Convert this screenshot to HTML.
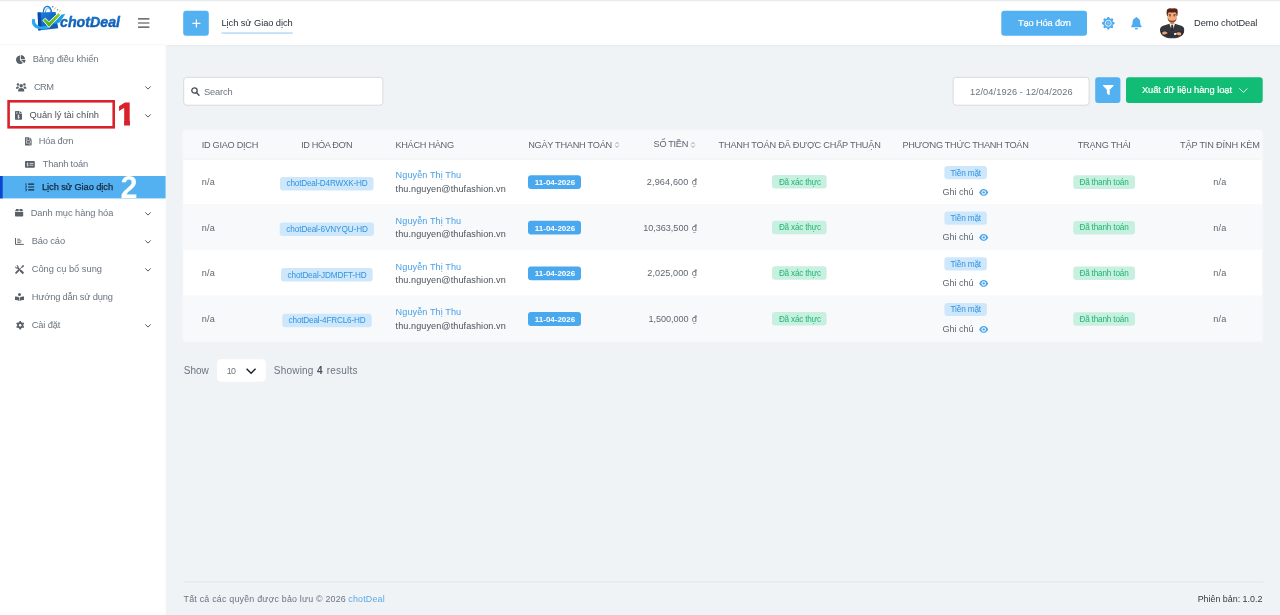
<!DOCTYPE html>
<html lang="vi">
<head>
<meta charset="utf-8">
<title>Lịch sử Giao dịch - chotDeal</title>
<style>
*{box-sizing:border-box}
html,body{margin:0;padding:0}
body{width:1280px;height:615px;overflow:hidden;position:relative;background:#eff3f6;font-family:"Liberation Sans",sans-serif;}
.t{position:absolute;white-space:pre;line-height:normal}
#tx{position:absolute;left:0;top:0;width:1280px;height:615px;will-change:transform}
svg{position:absolute;overflow:visible}
</style>
</head>
<body>
<svg id="bg" style="left:0;top:0" width="1280" height="615" viewBox="0 0 1280 615">
<rect x="0.00" y="45.00" width="1280.00" height="1.20" fill="#e9edf1"/>
<rect x="0.00" y="46.20" width="1280.00" height="1.00" fill="#edf1f4"/>
<rect x="0.00" y="0.00" width="1280.00" height="1.50" fill="#ebebeb"/>
<rect x="0.00" y="1.50" width="1280.00" height="43.50" fill="#ffffff"/>
<rect x="165.60" y="45.00" width="0.80" height="570.00" fill="#f2f5f7"/>
<rect x="0.00" y="45.00" width="165.60" height="570.00" fill="#ffffff"/>
<rect x="0.00" y="44.40" width="165.60" height="0.80" fill="#f6f6f7"/>
<rect x="0.00" y="176.00" width="165.60" height="22.40" fill="#53b0f1"/>
<rect x="0.00" y="176.00" width="2.70" height="22.40" fill="#0b46cf"/>
<rect x="8.60" y="101.30" width="105.10" height="26.00" fill="none" stroke="#d9222c" stroke-width="2.6"/>
<rect x="183.20" y="10.70" width="25.60" height="25.00" fill="#53b0f1" rx="3"/>
<rect x="221.50" y="32.30" width="71.30" height="1.50" fill="#b7daf7"/>
<rect x="1001.30" y="10.70" width="85.70" height="25.10" fill="#53b0f1" rx="3"/>
<rect x="183.70" y="77.30" width="199.20" height="27.90" fill="#ffffff" rx="3" stroke="#d6dade" stroke-width="1"/>
<rect x="953.10" y="77.30" width="136.00" height="27.90" fill="#ffffff" rx="3" stroke="#d6dade" stroke-width="1"/>
<rect x="1095.20" y="77.20" width="25.20" height="25.70" fill="#53b0f1" rx="3"/>
<rect x="1126.00" y="77.20" width="136.70" height="25.70" fill="#11bc74" rx="3"/>
<rect x="182.40" y="129.40" width="1080.80" height="212.80" fill="#f5f7f9" rx="3.8"/>
<clipPath id="cardclip"><rect x="183.2" y="130" width="1079" height="211.4" rx="3"/></clipPath><g clip-path="url(#cardclip)">
<rect x="183.20" y="130.00" width="1079.00" height="29.40" fill="#f8f9fb"/>
<rect x="183.20" y="158.80" width="1077.00" height="1.00" fill="#e8ebee"/>
<rect x="183.20" y="159.60" width="1079.00" height="44.60" fill="#ffffff"/>
<rect x="183.20" y="204.20" width="1079.00" height="45.80" fill="#f8f9fb"/>
<rect x="183.20" y="250.00" width="1079.00" height="45.60" fill="#ffffff"/>
<rect x="183.20" y="295.60" width="1079.00" height="45.80" fill="#f8f9fb"/>
</g>
<rect x="280.00" y="176.90" width="93.60" height="13.50" fill="#cfe7fb" rx="3"/>
<rect x="528.00" y="175.20" width="53.00" height="13.80" fill="#4aa8ef" rx="3"/>
<rect x="772.00" y="175.10" width="54.60" height="13.50" fill="#c8f0e0" rx="3"/>
<rect x="944.40" y="166.00" width="42.50" height="13.20" fill="#cfe7fb" rx="3"/>
<rect x="1073.30" y="175.30" width="61.70" height="13.60" fill="#c8f0e0" rx="3"/>
<rect x="279.70" y="222.50" width="94.30" height="13.50" fill="#cfe7fb" rx="3"/>
<rect x="528.00" y="220.80" width="53.00" height="13.80" fill="#4aa8ef" rx="3"/>
<rect x="772.00" y="220.70" width="54.60" height="13.50" fill="#c8f0e0" rx="3"/>
<rect x="944.40" y="211.60" width="42.50" height="13.20" fill="#cfe7fb" rx="3"/>
<rect x="1073.30" y="220.90" width="61.70" height="13.60" fill="#c8f0e0" rx="3"/>
<rect x="281.00" y="268.10" width="91.70" height="13.50" fill="#cfe7fb" rx="3"/>
<rect x="528.00" y="266.40" width="53.00" height="13.80" fill="#4aa8ef" rx="3"/>
<rect x="772.00" y="266.30" width="54.60" height="13.50" fill="#c8f0e0" rx="3"/>
<rect x="944.40" y="257.20" width="42.50" height="13.20" fill="#cfe7fb" rx="3"/>
<rect x="1073.30" y="266.50" width="61.70" height="13.60" fill="#c8f0e0" rx="3"/>
<rect x="282.30" y="313.80" width="89.50" height="13.50" fill="#cfe7fb" rx="3"/>
<rect x="528.00" y="312.10" width="53.00" height="13.80" fill="#4aa8ef" rx="3"/>
<rect x="772.00" y="312.00" width="54.60" height="13.50" fill="#c8f0e0" rx="3"/>
<rect x="944.40" y="302.90" width="42.50" height="13.20" fill="#cfe7fb" rx="3"/>
<rect x="1073.30" y="312.20" width="61.70" height="13.60" fill="#c8f0e0" rx="3"/>
<rect x="217.10" y="359.20" width="48.70" height="22.60" fill="#ffffff" rx="4"/>
<rect x="183.60" y="581.40" width="1080.00" height="1.00" fill="#e2e7ec"/>
</svg>
<svg style="left:979.1px;top:188.7px" width="9.4" height="6.8" viewBox="0 0 9.8 7.4"><path d="M0 3.7 C1.2 1.2 2.9 0 4.9 0 C6.9 0 8.6 1.2 9.8 3.7 C8.6 6.2 6.9 7.4 4.9 7.4 C2.9 7.4 1.2 6.2 0 3.7 Z" fill="#47a3ea"/><circle cx="4.9" cy="3.7" r="2.45" fill="#fff"/><circle cx="4.9" cy="3.7" r="1.3" fill="#47a3ea"/></svg>
<svg style="left:979.1px;top:234.3px" width="9.4" height="6.8" viewBox="0 0 9.8 7.4"><path d="M0 3.7 C1.2 1.2 2.9 0 4.9 0 C6.9 0 8.6 1.2 9.8 3.7 C8.6 6.2 6.9 7.4 4.9 7.4 C2.9 7.4 1.2 6.2 0 3.7 Z" fill="#47a3ea"/><circle cx="4.9" cy="3.7" r="2.45" fill="#fff"/><circle cx="4.9" cy="3.7" r="1.3" fill="#47a3ea"/></svg>
<svg style="left:979.1px;top:279.9px" width="9.4" height="6.8" viewBox="0 0 9.8 7.4"><path d="M0 3.7 C1.2 1.2 2.9 0 4.9 0 C6.9 0 8.6 1.2 9.8 3.7 C8.6 6.2 6.9 7.4 4.9 7.4 C2.9 7.4 1.2 6.2 0 3.7 Z" fill="#47a3ea"/><circle cx="4.9" cy="3.7" r="2.45" fill="#fff"/><circle cx="4.9" cy="3.7" r="1.3" fill="#47a3ea"/></svg>
<svg style="left:979.1px;top:325.6px" width="9.4" height="6.8" viewBox="0 0 9.8 7.4"><path d="M0 3.7 C1.2 1.2 2.9 0 4.9 0 C6.9 0 8.6 1.2 9.8 3.7 C8.6 6.2 6.9 7.4 4.9 7.4 C2.9 7.4 1.2 6.2 0 3.7 Z" fill="#47a3ea"/><circle cx="4.9" cy="3.7" r="2.45" fill="#fff"/><circle cx="4.9" cy="3.7" r="1.3" fill="#47a3ea"/></svg>
<!-- LOGO -->
<svg style="left:30px;top:4px;will-change:transform" width="96" height="30" viewBox="30 4 96 30">
  <defs>
    <linearGradient id="lgTxt" x1="0" y1="0" x2="0" y2="1"><stop offset="0" stop-color="#1f86dc"/><stop offset="1" stop-color="#0a49a2"/></linearGradient>
    <linearGradient id="lgChk" x1="0" y1="0" x2="0" y2="1"><stop offset="0" stop-color="#93d62c"/><stop offset="1" stop-color="#4fa61c"/></linearGradient>
    <linearGradient id="lgBag" x1="0" y1="0" x2="1" y2="1"><stop offset="0" stop-color="#1c7fdc"/><stop offset="1" stop-color="#0f55b4"/></linearGradient>
  </defs>
  <!-- bag handles -->
  <path d="M43.2 14 C43 8.6 45.2 6.4 47.2 6.4 C49.6 6.4 51.4 8.8 51.8 13.6" fill="none" stroke="#1b78d4" stroke-width="1.3"/>
  <path d="M45.4 13.4 C45.4 9.6 46.8 8 48.2 8 C49.8 8 50.4 10 50.6 12.6" fill="none" stroke="#2a8fe6" stroke-width="0.8"/>
  <!-- bag body -->
  <path d="M37.6 12.4 L55.6 12 L58.2 28.2 L38.4 30.4 Z" fill="url(#lgBag)"/>
  <path d="M37.6 12.4 L40.6 12.3 L41.6 30 L38.4 30.4 Z" fill="#0c4ba2"/>
  <!-- arrow band -->
  <path d="M56.5 15.4 L65.3 14 L59.6 22.4 L54 24 Z" fill="#1e9be9"/>
  <!-- swoosh -->
  <path d="M32.4 18.8 C30.4 24.2 34 29.6 42.6 29.4 C46 29.3 48.6 28.4 50.6 27.2 L46.6 25.6 C44.4 26.6 42.4 26.8 40.4 26.4 C36.2 25.6 34.4 22.6 35.2 19.6 Z" fill="#2aa9f3"/>
  <!-- check -->
  <path d="M42.8 20.4 L45.4 18.2 L49 21.8 L58.4 12.8 L60.8 15 L49 27.4 Z" fill="url(#lgChk)" stroke="#fff" stroke-width="0.9" stroke-linejoin="round"/>
  <!-- sparkles -->
  <circle cx="52.7" cy="6.7" r="0.75" fill="#1b78d4"/>
  <path d="M53.6 9.8 L56.4 7.1" stroke="#f2a43a" stroke-width="0.8"/>
  <circle cx="57.6" cy="9.8" r="0.7" fill="#36a9c9"/>
  <path d="M59.2 11.5 L60.9 10.3" stroke="#b8d432" stroke-width="0.9"/>
  <text x="60" y="26.8" font-family="'Liberation Sans',sans-serif" font-size="14.6" font-weight="700" font-style="italic" fill="url(#lgTxt)" stroke="#1262bd" stroke-width="0.45" textLength="60" lengthAdjust="spacingAndGlyphs">chotDeal</text>
</svg>
<!-- hamburger -->
<svg style="left:137.6px;top:18px" width="12" height="10" viewBox="0 0 12 10"><path d="M0 0.8H11.4M0 5H11.4M0 9.1H11.4" stroke="#3f454b" stroke-width="1.15" fill="none"/></svg>
<!-- plus -->
<svg style="left:191.5px;top:19px" width="9" height="9" viewBox="0 0 9 9"><path d="M4.4 0.4V8.4M0.4 4.4H8.4" stroke="#fff" stroke-width="1.2" fill="none"/></svg>

<!-- gear (header) -->
<svg style="left:1101.8px;top:17.1px" width="12.6" height="12.6" viewBox="-6.3 -6.3 12.6 12.6">
  <g fill="#4dabf0">
    <circle r="4.8"/>
    <path d="M-1.8 -4.3L-0.7 -6.3H0.7L1.8 -4.3ZM-1.8 4.3L-0.7 6.3H0.7L1.8 4.3ZM-4.3 -1.8L-6.3 -0.7V0.7L-4.3 1.8ZM4.3 -1.8L6.3 -0.7V0.7L4.3 1.8Z"/>
    <path transform="rotate(45)" d="M-1.8 -4.3L-0.7 -6.3H0.7L1.8 -4.3ZM-1.8 4.3L-0.7 6.3H0.7L1.8 4.3ZM-4.3 -1.8L-6.3 -0.7V0.7L-4.3 1.8ZM4.3 -1.8L6.3 -0.7V0.7L4.3 1.8Z"/>
  </g>
  <circle r="3" fill="none" stroke="#fff" stroke-width="0.85"/>
  <circle r="1.4" fill="#86c6f6"/>
</svg>
<!-- bell -->
<svg style="left:1130.8px;top:17.1px" width="10.8" height="12.6" viewBox="0 0 10.8 12.6">
  <path d="M5.4 0 C5.9 0 6.3 0.4 6.3 0.9 C8.2 1.4 9.2 3 9.2 5 C9.2 7.4 9.8 8.3 10.5 9 C10.9 9.4 10.7 10.2 10 10.2 H0.8 C0.1 10.2 -0.1 9.4 0.3 9 C1 8.3 1.6 7.4 1.6 5 C1.6 3 2.6 1.4 4.5 0.9 C4.5 0.4 4.9 0 5.4 0 Z M3.9 11 H6.9 C6.9 11.9 6.2 12.6 5.4 12.6 C4.6 12.6 3.9 11.9 3.9 11 Z" fill="#4dabf0"/>
</svg>
<!-- avatar -->
<svg style="left:1160px;top:7.8px" width="24.4" height="30.6" viewBox="0 0 24.4 30.6">
  <defs><clipPath id="avc"><path d="M0 0 H24.4 V22 C24.4 27.4 19 30.6 12.2 30.6 C5.4 30.6 0 27.4 0 22 Z"/></clipPath></defs>
  <g clip-path="url(#avc)">
    <path d="M0 30.6 V21.6 C0.2 19.2 1.6 18 4 17.4 L9.4 15.8 L12.2 15.2 L15 15.8 L20.4 17.4 C22.8 18 24.2 19.2 24.4 21.6 V30.6 Z" fill="#36363d"/>
    <path d="M9.3 15.6 L12.2 23.6 L15.1 15.6 L12.2 14.6 Z" fill="#f6f6f8"/>
    <path d="M11.4 17 H13 L13.5 22 L12.2 24.2 L10.9 22 Z" fill="#2b2b32"/>
    <path d="M10.2 12.6 H14.2 V15.6 L12.2 17 L10.2 15.6 Z" fill="#d98f63"/>
    <path d="M7.7 5 C7.7 2.6 16.6 2.6 16.6 5 V9.6 C16.6 12.6 14.4 14.4 12.2 14.4 C10 14.4 7.7 12.6 7.7 9.6 Z" fill="#f2ab7c"/>
    <path d="M7.7 9 C8 11.6 9.6 12.8 12.2 12.8 C14.8 12.8 16.3 11.6 16.6 9 V10 C16.6 13 14.4 14.6 12.2 14.6 C10 14.6 7.7 13 7.7 10 Z" fill="#8a4a2c"/>
    <path d="M7.2 8.6 C6 3.4 6.8 0.6 9 0.6 L10 0.2 L12 0.5 L14.4 0.2 L16.6 0.8 C17.8 1.2 18.2 4.2 17.1 8.6 L16.5 8 C16.6 5.6 16.2 4.6 15 4.2 C12.6 4.8 10.2 4.6 9 4.2 C8 4.8 7.7 6 7.8 8 Z" fill="#5a2217"/>
    <path d="M8.8 6.6 L11 7 M13.4 7 L15.6 6.6" stroke="#3a1710" stroke-width="0.8"/>
    <path d="M9.3 7.9 H10.8 M13.7 7.9 H15.2" stroke="#2e1a14" stroke-width="0.7"/>
    <path d="M0.8 23.4 C5 22.4 9 24 12.2 25.8 C15.4 24 19.4 22.4 23.6 23.4 L22.8 28 C18.4 26.8 15 27.8 12.2 29 C9.4 27.8 6 26.8 1.6 28 Z" fill="#2d2d34"/>
    <path d="M2.2 24.4 C3.8 23 6.4 23.4 7.6 25 C6.4 26.4 3.8 26.8 2.4 26.2 Z" fill="#eba277"/>
    <path d="M21.2 25 C19.8 23.8 17.2 24 15.8 25.6 C17 27.2 19.6 27.8 21 27 Z" fill="#eba277"/>
    <path d="M13.8 25.4 L15.8 24.8 L16.6 26.6 L14.4 27.2 Z" fill="#f6f6f8"/>
  </g>
</svg>

<!-- search icon -->
<svg style="left:190.8px;top:87.4px" width="8.6" height="8.8" viewBox="0 0 8.6 8.8"><circle cx="3.5" cy="3.5" r="2.7" fill="none" stroke="#454b52" stroke-width="1.3"/><path d="M5.5 5.6L8 8.2" stroke="#454b52" stroke-width="1.4" stroke-linecap="round"/></svg>
<!-- filter icon -->
<svg style="left:1102.8px;top:85.2px" width="10.6" height="10.2" viewBox="0 0 10.6 10.2"><path d="M0.5 0 H10.1 C10.6 0 10.8 0.5 10.4 0.9 L6.7 4.8 V9.4 C6.7 9.9 6.2 10.2 5.8 9.9 L4.3 8.8 C4 8.6 3.9 8.4 3.9 8.1 V4.8 L0.2 0.9 C-0.2 0.5 0 0 0.5 0 Z" fill="#fff"/></svg>
<!-- green btn chevron -->
<svg style="left:1238.8px;top:88.2px" width="8.8" height="5" viewBox="0 0 8.8 5"><path d="M0.3 0.4L4.4 4.4L8.5 0.4" fill="none" stroke="#fff" stroke-width="0.9"/></svg>
<!-- select chevron -->
<svg style="left:246.2px;top:367.6px" width="10.2" height="6.2" viewBox="0 0 10.2 6.2"><path d="M0.6 0.7L5.1 5.2L9.6 0.7" fill="none" stroke="#1d2126" stroke-width="1.5"/></svg>

<!-- sidebar chevrons -->
<svg style="left:144.6px;top:86.2px" width="6" height="3.6" viewBox="0 0 6 3.6"><path d="M0.3 0.4L3 3.1L5.7 0.4" fill="none" stroke="#4d5359" stroke-width="0.95"/></svg>
<svg style="left:144.6px;top:114.2px" width="6" height="3.6" viewBox="0 0 6 3.6"><path d="M0.3 0.4L3 3.1L5.7 0.4" fill="none" stroke="#4d5359" stroke-width="0.95"/></svg>
<svg style="left:144.6px;top:211.6px" width="6" height="3.6" viewBox="0 0 6 3.6"><path d="M0.3 0.4L3 3.1L5.7 0.4" fill="none" stroke="#4d5359" stroke-width="0.95"/></svg>
<svg style="left:144.6px;top:239.6px" width="6" height="3.6" viewBox="0 0 6 3.6"><path d="M0.3 0.4L3 3.1L5.7 0.4" fill="none" stroke="#4d5359" stroke-width="0.95"/></svg>
<svg style="left:144.6px;top:267.6px" width="6" height="3.6" viewBox="0 0 6 3.6"><path d="M0.3 0.4L3 3.1L5.7 0.4" fill="none" stroke="#4d5359" stroke-width="0.95"/></svg>
<svg style="left:144.6px;top:323.6px" width="6" height="3.6" viewBox="0 0 6 3.6"><path d="M0.3 0.4L3 3.1L5.7 0.4" fill="none" stroke="#4d5359" stroke-width="0.95"/></svg>

<!-- sidebar icons -->
<!-- pie -->
<svg style="left:15.7px;top:55px" width="9.6" height="9.04" viewBox="0 0 544 512"><path fill="#5a6067" d="M527.79 288H290.5l158.03 158.03c6.04 6.04 15.98 6.53 22.19.68 38.7-36.46 65.32-85.61 73.13-140.86 1.34-9.46-6.51-17.85-16.06-17.85zm-15.83-64.8C503.72 103.74 408.26 8.28 288.8.04 279.68-.59 272 7.1 272 16.24V240h223.77c9.14 0 16.82-7.68 16.19-16.8zM224 288V50.71c0-9.55-8.39-17.4-17.84-16.06C86.99 51.49-4.1 155.6.14 280.37 4.5 408.51 114.83 513.59 243.03 511.98c50.4-.63 96.97-16.87 135.26-44.03 7.9-5.6 8.42-17.23 1.57-24.08L224 288z"/></svg>
<!-- users -->
<svg style="left:15.6px;top:83.4px" width="10.4" height="8.6" viewBox="0 0 10.4 8.6" fill="#5a6067"><circle cx="2" cy="1.6" r="1.25"/><circle cx="8.4" cy="1.6" r="1.25"/><circle cx="5.2" cy="2.7" r="1.7"/><path d="M0 5.2 C0 4 0.8 3.4 1.8 3.4 C2.6 3.4 3 3.6 3.2 3.9 C2.6 4.4 2.3 5 2.2 5.7 H0 Z M10.4 5.2 C10.4 4 9.6 3.4 8.6 3.4 C7.8 3.4 7.4 3.6 7.2 3.9 C7.8 4.4 8.1 5 8.2 5.7 H10.4 Z M2.2 8.6 V7.2 C2.2 5.8 3.4 5 5.2 5 C7 5 8.2 5.8 8.2 7.2 V8.6 Z"/></svg>
<!-- file-invoice-dollar -->
<svg style="left:15px;top:111px" width="7" height="8.8" viewBox="0 0 7 8.8"><path d="M0.7 0 H4.2 V2.6 H7 V8.1 C7 8.5 6.7 8.8 6.3 8.8 H0.7 C0.3 8.8 0 8.5 0 8.1 V0.7 C0 0.3 0.3 0 0.7 0 Z M4.8 0 L7 2.1 H4.8 Z" fill="#5a6067"/><path d="M1 1.3H2.6M1 2.5H2.6" stroke="#fff" stroke-width="0.5"/><path d="M3.5 3.6V7.8M4.4 4.6C4.2 4.2 2.7 4.1 2.7 5C2.7 5.9 4.4 5.5 4.4 6.5C4.4 7.3 2.9 7.3 2.6 6.8" stroke="#fff" stroke-width="0.6" fill="none"/></svg>
<!-- file-invoice -->
<svg style="left:24.7px;top:137.2px" width="6.6" height="8.6" viewBox="0 0 7 8.8"><path d="M0.7 0 H4.2 V2.6 H7 V8.1 C7 8.5 6.7 8.8 6.3 8.8 H0.7 C0.3 8.8 0 8.5 0 8.1 V0.7 C0 0.3 0.3 0 0.7 0 Z M4.8 0 L7 2.1 H4.8 Z" fill="#5a6067"/><path d="M1 1.3H2.8M1 2.5H2.8M4.2 7.6H6" stroke="#fff" stroke-width="0.5"/><rect x="1.3" y="3.9" width="4.4" height="2.4" fill="none" stroke="#fff" stroke-width="0.6"/></svg>
<!-- money-check -->
<svg style="left:24.7px;top:161px" width="9.8" height="6.8" viewBox="0 0 9.8 6.8"><rect width="9.8" height="6.8" rx="0.8" fill="#5a6067"/><path d="M4.6 2.4H8.4M4.6 4.2H8.4" stroke="#fff" stroke-width="0.7"/><path d="M2.6 1.5V5.3M3.4 2.5C3.2 2.1 1.8 2.1 1.8 2.9C1.8 3.7 3.4 3.3 3.4 4.2C3.4 5 2 4.9 1.7 4.4" stroke="#fff" stroke-width="0.55" fill="none"/></svg>
<!-- list-ol -->
<svg style="left:25.3px;top:183.4px" width="9.2" height="8" viewBox="0 0 9.2 8"><path d="M3.2 1.1H9.2M3.2 4H9.2M3.2 6.9H9.2" stroke="#15273b" stroke-width="1.05"/><path d="M0.9 0V2M0.3 2.1H1.6M0.3 3.2H1.5V3.9L0.3 4.9H1.6M0.3 6H1.5V7.9H0.3M0.7 6.9H1.5" stroke="#15273b" stroke-width="0.55" fill="none"/></svg>
<!-- box -->
<svg style="left:15px;top:209.3px" width="8.2" height="7.4" viewBox="0 0 8.2 7.4"><path d="M1.3 0 H3.7 V2.3 H0 L0.9 0.4 C1 0.2 1.1 0 1.3 0 Z M4.5 0 H6.9 C7.1 0 7.2 0.2 7.3 0.4 L8.2 2.3 H4.5 Z M0 3 H8.2 V6.7 C8.2 7.1 7.9 7.4 7.5 7.4 H0.7 C0.3 7.4 0 7.1 0 6.7 Z" fill="#5a6067"/></svg>
<!-- chart-bar -->
<svg style="left:15px;top:238.2px" width="8.8" height="7" viewBox="0 0 8.8 7"><path d="M0.5 0V6.4H8.8" fill="none" stroke="#5a6067" stroke-width="1"/><path d="M2.2 1.2H5.2M2.2 2.9H6.6M2.2 4.6H5.8" stroke="#5a6067" stroke-width="0.85"/></svg>
<!-- tools -->
<svg style="left:15px;top:265.3px" width="9" height="8.8" viewBox="0 0 9 8.8"><g stroke="#5a6067" fill="none" stroke-linecap="round"><path d="M1.1 7.8L4 4.9" stroke-width="1.9"/><path d="M4.3 4.5L7.6 1.2" stroke-width="1"/><path d="M3 3L7.7 7.7" stroke-width="1.2"/><path d="M5.9 5.9L7.8 7.8" stroke-width="2.1"/></g><path d="M6.6 0.9L8.3 0L9 0.7L8.1 2.4L7 2.6Z" fill="#5a6067"/><path d="M0.1 1.2 C-0.2 2.6 1.2 4 2.8 3.6 L3.6 2.8 C4 1.2 2.6 -0.2 1.2 0.1 L2.4 1.3 L2.2 2.2 L1.3 2.4 Z" fill="#5a6067"/></svg>
<!-- book-reader -->
<svg style="left:15px;top:293.3px" width="9" height="8" viewBox="0 0 9 8"><circle cx="4.5" cy="1.5" r="1.5" fill="#5a6067"/><path d="M0 3.4 C1.6 3.4 3.2 3.7 4.2 4.4 V8 C3.2 7.3 1.6 7 0 7 Z M9 3.4 C7.4 3.4 5.8 3.7 4.8 4.4 V8 C5.8 7.3 7.4 7 9 7 Z" fill="#5a6067"/></svg>
<!-- cog -->
<svg style="left:15.7px;top:321.3px" width="8.4" height="8.4" viewBox="-4.2 -4.2 8.4 8.4"><g fill="#5a6067"><circle r="3.1"/><path d="M-1 -2.8L-0.7 -4.2H0.7L1 -2.8ZM-1 2.8L-0.7 4.2H0.7L1 2.8Z"/><g transform="rotate(60)"><path d="M-1 -2.8L-0.7 -4.2H0.7L1 -2.8ZM-1 2.8L-0.7 4.2H0.7L1 2.8Z"/></g><g transform="rotate(120)"><path d="M-1 -2.8L-0.7 -4.2H0.7L1 -2.8ZM-1 2.8L-0.7 4.2H0.7L1 2.8Z"/></g></g><circle r="1.25" fill="#fff"/></svg>

<!-- sort icons -->
<svg style="left:615px;top:142.2px" width="4" height="5.8" viewBox="0 0 4 5.8"><path d="M0.3 2.3L2 0.3L3.7 2.3M0.3 3.5L2 5.5L3.7 3.5" fill="none" stroke="#868d94" stroke-width="0.75" stroke-linejoin="round"/></svg>
<svg style="left:690.6px;top:141.9px" width="4" height="5.8" viewBox="0 0 4 5.8"><path d="M0.3 2.3L2 0.3L3.7 2.3M0.3 3.5L2 5.5L3.7 3.5" fill="none" stroke="#868d94" stroke-width="0.75" stroke-linejoin="round"/></svg>

<div id="tx">
<span class="t" style="left:32.7px;top:54.00px;font-size:9.3px;letter-spacing:-0.066px;color:#6b7480;">Bảng điều khiển</span>
<span class="t" style="left:34.0px;top:82.00px;font-size:9.3px;letter-spacing:-0.629px;color:#6b7480;">CRM</span>
<span class="t" style="left:29.6px;top:110.00px;font-size:9.3px;letter-spacing:-0.022px;color:#4b525a;">Quản lý tài chính</span>
<span class="t" style="left:38.7px;top:136.00px;font-size:9.3px;letter-spacing:-0.211px;color:#6b7480;">Hóa đơn</span>
<span class="t" style="left:42.7px;top:159.00px;font-size:9.3px;letter-spacing:-0.175px;color:#6b7480;">Thanh toán</span>
<span class="t" style="left:42.0px;top:182.00px;font-size:9.3px;letter-spacing:-0.081px;color:#15273b;-webkit-text-stroke:0.25px #15273b;">Lịch sử Giao dịch</span>
<span class="t" style="left:30.7px;top:208.00px;font-size:9.3px;letter-spacing:-0.067px;color:#6b7480;">Danh mục hàng hóa</span>
<span class="t" style="left:31.7px;top:236.00px;font-size:9.3px;letter-spacing:-0.118px;color:#6b7480;">Báo cáo</span>
<span class="t" style="left:31.7px;top:264.00px;font-size:9.3px;letter-spacing:0.000px;color:#6b7480;">Công cụ bổ sung</span>
<span class="t" style="left:31.7px;top:292.00px;font-size:9.3px;letter-spacing:-0.188px;color:#6b7480;">Hướng dẫn sử dụng</span>
<span class="t" style="left:31.7px;top:320.00px;font-size:9.3px;letter-spacing:-0.124px;color:#6b7480;">Cài đặt</span>
<span class="t" style="left:221.5px;top:18.00px;font-size:9.3px;letter-spacing:-0.075px;color:#2a3038;">Lịch sử Giao dịch</span>
<span class="t" style="left:1017.9px;top:18.00px;font-size:9.3px;letter-spacing:-0.153px;color:#ffffff;-webkit-text-stroke:0.2px #fff;">Tạo Hóa đơn</span>
<span class="t" style="left:1194.0px;top:18.00px;font-size:9.3px;letter-spacing:-0.060px;color:#2a3038;">Demo chotDeal</span>
<span class="t" style="left:204.0px;top:87.00px;font-size:9.3px;letter-spacing:-0.145px;color:#6b7480;">Search</span>
<span class="t" style="left:970.0px;top:87.00px;font-size:9.2px;letter-spacing:0.116px;color:#6b7480;">12/04/1926 - 12/04/2026</span>
<span class="t" style="left:1141.9px;top:85.00px;font-size:9.3px;letter-spacing:-0.041px;color:#ffffff;-webkit-text-stroke:0.2px #fff;">Xuất dữ liệu hàng loạt</span>
<span class="t" style="left:201.7px;top:140.00px;font-size:9.2px;letter-spacing:-0.286px;color:#5d656e;">ID GIAO DỊCH</span>
<span class="t" style="left:301.2px;top:140.00px;font-size:9.2px;letter-spacing:-0.384px;color:#5d656e;">ID HÓA ĐƠN</span>
<span class="t" style="left:395.4px;top:140.00px;font-size:9.2px;letter-spacing:-0.287px;color:#5d656e;">KHÁCH HÀNG</span>
<span class="t" style="left:528.2px;top:140.00px;font-size:9.2px;letter-spacing:-0.264px;color:#5d656e;">NGÀY THANH TOÁN</span>
<span class="t" style="left:653.6px;top:139.00px;font-size:9.2px;letter-spacing:-0.313px;color:#5d656e;">SỐ TIỀN</span>
<span class="t" style="left:718.6px;top:140.00px;font-size:9.2px;letter-spacing:-0.214px;color:#5d656e;">THANH TOÁN ĐÃ ĐƯỢC CHẤP THUẬN</span>
<span class="t" style="left:902.4px;top:140.00px;font-size:9.2px;letter-spacing:-0.321px;color:#5d656e;">PHƯƠNG THỨC THANH TOÁN</span>
<span class="t" style="left:1077.7px;top:140.00px;font-size:9.2px;letter-spacing:-0.258px;color:#5d656e;">TRẠNG THÁI</span>
<span class="t" style="left:1180.0px;top:140.00px;font-size:9.2px;letter-spacing:-0.167px;color:#5d656e;">TẬP TIN ĐÍNH KÈM</span>
<span class="t" style="left:201.7px;top:177.00px;font-size:9.1px;letter-spacing:0.215px;color:#5f6770;">n/a</span>
<span class="t" style="left:286.6px;top:179.00px;font-size:8.2px;letter-spacing:-0.199px;color:#2f94e2;">chotDeal-D4RWXK-HD</span>
<span class="t" style="left:395.6px;top:170.00px;font-size:9.1px;letter-spacing:0.087px;color:#4aa0e6;">Nguyễn Thị Thu</span>
<span class="t" style="left:395.6px;top:184.00px;font-size:9.1px;letter-spacing:0.077px;color:#4b525a;">thu.nguyen@thufashion.vn</span>
<span class="t" style="left:534.8px;top:178.00px;font-size:8px;letter-spacing:-0.008px;color:#ffffff;font-weight:700;">11-04-2026</span>
<span class="t" style="left:646.8px;top:177.00px;font-size:9.1px;letter-spacing:0.137px;color:#5f6770;">2,964,600</span>
<span class="t" style="left:691.8px;top:177.00px;font-size:8.4px;letter-spacing:0.000px;color:#5f6770;font-family:'DejaVu Sans',sans-serif;">₫</span>
<span class="t" style="left:778.9px;top:178.00px;font-size:8.2px;letter-spacing:-0.207px;color:#22b573;">Đã xác thực</span>
<span class="t" style="left:950.5px;top:168.00px;font-size:8.3px;letter-spacing:-0.184px;color:#2f94e2;">Tiền mặt</span>
<span class="t" style="left:942.5px;top:187.00px;font-size:9.1px;letter-spacing:-0.035px;color:#5f6770;">Ghi chú</span>
<span class="t" style="left:1079.4px;top:178.00px;font-size:8.2px;letter-spacing:-0.173px;color:#22b573;">Đã thanh toán</span>
<span class="t" style="left:1213.3px;top:177.00px;font-size:9.1px;letter-spacing:0.148px;color:#5f6770;">n/a</span>
<span class="t" style="left:201.7px;top:223.00px;font-size:9.1px;letter-spacing:0.215px;color:#5f6770;">n/a</span>
<span class="t" style="left:286.3px;top:225.00px;font-size:8.2px;letter-spacing:-0.098px;color:#2f94e2;">chotDeal-6VNYQU-HD</span>
<span class="t" style="left:395.6px;top:216.00px;font-size:9.1px;letter-spacing:0.087px;color:#4aa0e6;">Nguyễn Thị Thu</span>
<span class="t" style="left:395.6px;top:229.00px;font-size:9.1px;letter-spacing:0.077px;color:#4b525a;">thu.nguyen@thufashion.vn</span>
<span class="t" style="left:534.8px;top:224.00px;font-size:8px;letter-spacing:-0.008px;color:#ffffff;font-weight:700;">11-04-2026</span>
<span class="t" style="left:643.2px;top:223.00px;font-size:9.1px;letter-spacing:-0.022px;color:#5f6770;">10,363,500</span>
<span class="t" style="left:691.8px;top:223.00px;font-size:8.4px;letter-spacing:0.000px;color:#5f6770;font-family:'DejaVu Sans',sans-serif;">₫</span>
<span class="t" style="left:778.9px;top:223.00px;font-size:8.2px;letter-spacing:-0.207px;color:#22b573;">Đã xác thực</span>
<span class="t" style="left:950.5px;top:213.00px;font-size:8.3px;letter-spacing:-0.184px;color:#2f94e2;">Tiền mặt</span>
<span class="t" style="left:942.5px;top:232.00px;font-size:9.1px;letter-spacing:-0.035px;color:#5f6770;">Ghi chú</span>
<span class="t" style="left:1079.4px;top:223.00px;font-size:8.2px;letter-spacing:-0.173px;color:#22b573;">Đã thanh toán</span>
<span class="t" style="left:1213.3px;top:223.00px;font-size:9.1px;letter-spacing:0.148px;color:#5f6770;">n/a</span>
<span class="t" style="left:201.7px;top:268.00px;font-size:9.1px;letter-spacing:0.215px;color:#5f6770;">n/a</span>
<span class="t" style="left:287.6px;top:271.00px;font-size:8.2px;letter-spacing:-0.172px;color:#2f94e2;">chotDeal-JDMDFT-HD</span>
<span class="t" style="left:395.6px;top:262.00px;font-size:9.1px;letter-spacing:0.087px;color:#4aa0e6;">Nguyễn Thị Thu</span>
<span class="t" style="left:395.6px;top:275.00px;font-size:9.1px;letter-spacing:0.077px;color:#4b525a;">thu.nguyen@thufashion.vn</span>
<span class="t" style="left:534.8px;top:269.00px;font-size:8px;letter-spacing:-0.008px;color:#ffffff;font-weight:700;">11-04-2026</span>
<span class="t" style="left:647.3px;top:268.00px;font-size:9.1px;letter-spacing:0.081px;color:#5f6770;">2,025,000</span>
<span class="t" style="left:691.8px;top:268.00px;font-size:8.4px;letter-spacing:0.000px;color:#5f6770;font-family:'DejaVu Sans',sans-serif;">₫</span>
<span class="t" style="left:778.9px;top:269.00px;font-size:8.2px;letter-spacing:-0.207px;color:#22b573;">Đã xác thực</span>
<span class="t" style="left:950.5px;top:259.00px;font-size:8.3px;letter-spacing:-0.184px;color:#2f94e2;">Tiền mặt</span>
<span class="t" style="left:942.5px;top:278.00px;font-size:9.1px;letter-spacing:-0.035px;color:#5f6770;">Ghi chú</span>
<span class="t" style="left:1079.4px;top:269.00px;font-size:8.2px;letter-spacing:-0.173px;color:#22b573;">Đã thanh toán</span>
<span class="t" style="left:1213.3px;top:268.00px;font-size:9.1px;letter-spacing:0.148px;color:#5f6770;">n/a</span>
<span class="t" style="left:201.7px;top:314.00px;font-size:9.1px;letter-spacing:0.215px;color:#5f6770;">n/a</span>
<span class="t" style="left:288.6px;top:316.00px;font-size:8.2px;letter-spacing:-0.177px;color:#2f94e2;">chotDeal-4FRCL6-HD</span>
<span class="t" style="left:395.6px;top:307.00px;font-size:9.1px;letter-spacing:0.087px;color:#4aa0e6;">Nguyễn Thị Thu</span>
<span class="t" style="left:395.6px;top:321.00px;font-size:9.1px;letter-spacing:0.077px;color:#4b525a;">thu.nguyen@thufashion.vn</span>
<span class="t" style="left:534.8px;top:315.00px;font-size:8px;letter-spacing:-0.008px;color:#ffffff;font-weight:700;">11-04-2026</span>
<span class="t" style="left:648.4px;top:314.00px;font-size:9.1px;letter-spacing:-0.041px;color:#5f6770;">1,500,000</span>
<span class="t" style="left:691.8px;top:314.00px;font-size:8.4px;letter-spacing:0.000px;color:#5f6770;font-family:'DejaVu Sans',sans-serif;">₫</span>
<span class="t" style="left:778.9px;top:315.00px;font-size:8.2px;letter-spacing:-0.207px;color:#22b573;">Đã xác thực</span>
<span class="t" style="left:950.5px;top:304.00px;font-size:8.3px;letter-spacing:-0.184px;color:#2f94e2;">Tiền mặt</span>
<span class="t" style="left:942.5px;top:324.00px;font-size:9.1px;letter-spacing:-0.035px;color:#5f6770;">Ghi chú</span>
<span class="t" style="left:1079.4px;top:315.00px;font-size:8.2px;letter-spacing:-0.173px;color:#22b573;">Đã thanh toán</span>
<span class="t" style="left:1213.3px;top:314.00px;font-size:9.1px;letter-spacing:0.148px;color:#5f6770;">n/a</span>
<span class="t" style="left:183.7px;top:365.00px;font-size:10px;letter-spacing:0.046px;color:#6b7480;">Show</span>
<span class="t" style="left:226.8px;top:366.00px;font-size:8.8px;letter-spacing:-0.698px;color:#6b7480;">10</span>
<span class="t" style="left:273.8px;top:365.00px;font-size:10px;letter-spacing:0.206px;color:#6b7480;">Showing</span>
<span class="t" style="left:317.1px;top:365.00px;font-size:10px;letter-spacing:0.000px;color:#4b525a;font-weight:700;">4</span>
<span class="t" style="left:326.7px;top:365.00px;font-size:10px;letter-spacing:0.235px;color:#6b7480;">results</span>
<span class="t" style="left:183.6px;top:594.00px;font-size:8.9px;letter-spacing:0.206px;color:#6b7480;">Tất cả các quyền được bảo lưu © 2026</span>
<span class="t" style="left:348.3px;top:594.00px;font-size:8.9px;letter-spacing:0.196px;color:#5aa9e8;">chotDeal</span>
<span class="t" style="left:1197.7px;top:594.00px;font-size:8.9px;letter-spacing:0.003px;color:#343a40;">Phiên bản: 1.0.2</span>
<span class="t" style="left:117.5px;top:97.00px;font-size:31.3px;letter-spacing:0.000px;color:#d9222c;font-weight:700;-webkit-text-stroke:1.1px #d9222c;clip-path:polygon(0 0,0.4em 0,0.4em 1.2em,0.21em 1.2em,0.21em 0.7em,0 0.7em);">1</span>
<span class="t" style="left:120.6px;top:170.00px;font-size:30.6px;letter-spacing:0.000px;color:#ffffff;font-weight:700;">2</span>
</div>
</body>
</html>
